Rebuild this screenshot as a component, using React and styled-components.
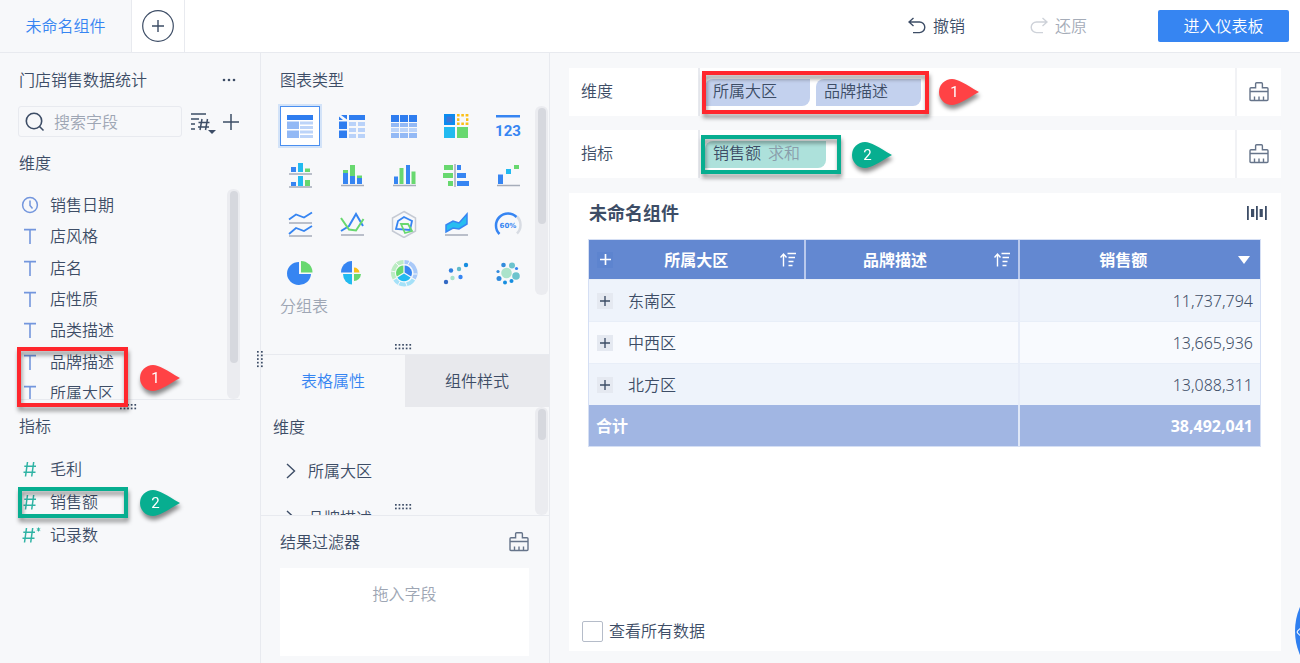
import React from 'react';
import styled, { createGlobalStyle, css } from 'styled-components';

const colors = {
	text: '#3d4d66',
	muted: '#9ea6b4',
	blue: '#3685f2',
	field: '#7396dd',
	teal: '#2fb3a4',
	panel: '#f7f8fa',
	line: '#e8eaef',
	red: '#ff272d',
	green: '#07ae90',
};

const GlobalStyle = createGlobalStyle`
	* {
		box-sizing: border-box;
	}

	body {
		margin: 0;
		overflow: hidden;
		background: #ffffff;
		color: ${colors.text};
		font: 350 16px/24px 'Noto Sans', 'Noto Sans CJK SC', sans-serif;
	}

	button,
	input {
		font: inherit;
		color: inherit;
	}

	button {
		padding: 0;
		border: 0;
		background: none;
	}

	svg {
		display: block;
		flex: none;
	}
`;

const Page = styled.div`
	position: relative;
	display: flex;
	flex-direction: column;
	height: 100vh;
	overflow: hidden;
`;

const Header = styled.header`
	display: flex;
	flex: none;
	height: 53px;
	border-bottom: 1px solid ${colors.line};
`;

const ComponentTab = styled.button`
	width: 132px;
	border-right: 1px solid ${colors.line};
	background: ${colors.panel};
	color: ${colors.blue};
`;

const AddTab = styled.button`
	display: flex;
	align-items: center;
	justify-content: center;
	width: 53px;
	border-right: 1px solid ${colors.line};
`;

const HeaderActions = styled.div`
	display: flex;
	align-items: center;
	margin-left: auto;
	padding-right: 11px;
`;

const HeaderAction = styled.button`
	display: flex;
	align-items: center;
	gap: 7px;
	margin-right: ${(props) => props.$gap}px;
	color: ${(props) => (props.disabled ? '#a5acb8' : colors.text)};
`;

const EnterButton = styled.button`
	width: 131px;
	height: 32px;
	border-radius: 2px;
	background: ${colors.blue};
	color: #ffffff;
`;

const Body = styled.div`
	display: flex;
	flex: 1;
	min-height: 0;
	background: ${colors.panel};
`;

const Sidebar = styled.aside`
	position: relative;
	display: flex;
	flex-direction: column;
	flex: none;
	width: 261px;
	padding: 15px 20px 0 18px;
	border-right: 1px solid ${colors.line};
`;

const TitleRow = styled.div`
	display: flex;
	align-items: center;
	justify-content: space-between;
	padding: 0 3px 0 1px;
`;

const Heading = styled.h2`
	margin: 0;
	font-size: 16px;
	font-weight: 350;
`;

const SearchRow = styled.div`
	display: flex;
	align-items: center;
	margin-top: 14px;
	padding-right: 1px;
`;

const SearchBox = styled.label`
	display: flex;
	align-items: center;
	gap: 9px;
	flex: 1;
	min-width: 0;
	height: 31px;
	margin-right: 8px;
	padding: 0 6px;
	border: 1px solid ${colors.line};
	border-radius: 3px;

	input {
		flex: 1;
		min-width: 0;
		padding: 0;
		border: 0;
		outline: 0;
		background: none;
	}

	input::placeholder {
		color: ${colors.muted};
		opacity: 1;
	}
`;

const IconButton = styled.button`
	display: flex;
	align-items: center;
	justify-content: center;
`;

const SortButton = styled(IconButton)`
	margin-right: 6px;
`;

const GroupTitle = styled(Heading)`
	margin: ${(props) => props.$top}px 1px 0;
`;

const FieldScroll = styled.div`
	display: flex;
	justify-content: space-between;
	height: 211px;
	margin-top: 14px;
	border-bottom: 1px solid ${colors.line};
	overflow: hidden;
`;

const FieldList = styled.ul`
	display: grid;
	grid-auto-rows: 1fr;
	height: ${(props) => props.$height}px;
	margin: ${(props) => props.$top || 0}px 0 0;
	padding: 0;
	list-style: none;
`;

const Field = styled.li`
	display: flex;
	align-items: center;
	gap: 8px;
`;

const Track = styled.div`
	flex: none;
	width: 13px;
	height: ${(props) => props.$height};
	margin-top: ${(props) => props.$top || 0}px;
	padding: 2px;
	border-radius: 6px;
	background: #ebecf0;
`;

const Thumb = styled.div`
	width: 8px;
	height: ${(props) => props.$height}px;
	border-radius: 4px;
	margin: 0 auto;
	background: #d6d8de;
`;

const HandleRow = styled.div`
	display: flex;
	justify-content: center;
	height: 14px;
	padding-top: 4px;
`;

const SideHandle = styled.div`
	position: absolute;
	right: -3px;
	top: 298px;
	z-index: 1;
`;

const Middle = styled.section`
	display: flex;
	flex-direction: column;
	flex: none;
	width: 289px;
	border-right: 1px solid ${colors.line};
`;

const ChartTypes = styled.div`
	display: flex;
	justify-content: space-between;
	height: 302px;
	padding: 15px 1px 0 13px;
	border-bottom: 1px solid ${colors.line};
`;

const ChartTypesMain = styled.div`
	display: flex;
	flex-direction: column;

	${Heading} {
		margin-left: 6px;
	}
`;

const ChartGrid = styled.div`
	display: grid;
	grid-template-columns: repeat(5, 52px);
	grid-auto-rows: 49px;
	margin-top: 9px;
`;

const ChartButton = styled.button`
	display: flex;
	align-items: center;
	justify-content: center;
	justify-self: center;
	align-self: center;
	width: 40px;
	height: 40px;
	${(props) =>
		props.$active &&
		css`
			border: 1px solid #4a8ff0;
			box-shadow: 0 0 0 2px #d3e3f8;
			background: #ffffff;
		`}
`;

const ChartName = styled.div`
	margin-top: -3px;
	padding-left: 6px;
	color: ${colors.muted};
`;

const MiddleHandle = styled.div`
	display: flex;
	justify-content: center;
	margin: auto 0 4px;
`;

const Tabs = styled.div`
	display: flex;
	flex: none;
	height: 52px;
`;

const Tab = styled.button`
	flex: 1;
	background: ${(props) => (props.$active ? 'transparent' : '#e8e9ed')};
	color: ${(props) => (props.$active ? colors.blue : colors.text)};
`;

const Attributes = styled.div`
	position: relative;
	display: flex;
	justify-content: space-between;
	height: 109px;
	padding: 0 1px 0 12px;
	border-bottom: 1px solid ${colors.line};
	overflow: hidden;
`;

const AttributeMain = styled.div`
	padding-top: 8px;
`;

const AttributeItem = styled.button`
	display: flex;
	align-items: center;
	gap: 11px;
	height: 24px;
	margin: ${(props) => props.$top}px 0 0 12px;
`;

const AttributeHandle = styled.div`
	position: absolute;
	left: 50%;
	bottom: 5px;
	margin-left: -10px;
`;

const Filter = styled.div`
	display: flex;
	flex-direction: column;
	flex: 1;
	padding: 14px 20px 7px 19px;
`;

const FilterTitle = styled.div`
	display: flex;
	align-items: center;
	justify-content: space-between;
`;

const DropArea = styled.div`
	flex: 1;
	margin-top: 14px;
	padding-top: 14px;
	background: #ffffff;
	color: ${colors.muted};
	text-align: center;
`;

const Main = styled.main`
	display: flex;
	flex-direction: column;
	flex: 1;
	gap: 14px;
	min-width: 0;
	padding: 15px 19px 12px;
`;

const Shelf = styled.div`
	display: flex;
	flex: none;
	height: 48px;
	background: #ffffff;
`;

const ShelfLabel = styled.div`
	width: 131px;
	padding: 11px 12px;
	border-right: 2px solid ${colors.line};
`;

const Chips = styled.div`
	display: flex;
	align-items: center;
	gap: 6px;
	flex: 1;
	padding-left: 5px;
`;

const Chip = styled.div`
	min-width: 105px;
	height: 27px;
	padding: 0 ${(props) => (props.$measure ? 26 : 7)}px 0 8px;
	border-radius: 8px 0;
	background: ${(props) => (props.$measure ? '#ade1db' : '#c3d1ee')};

	span {
		margin-left: 7px;
		color: #8a9eab;
	}
`;

const ShelfClear = styled(IconButton)`
	width: 46px;
	border-left: 2px solid #f1f2f5;
`;

const ChartCard = styled.section`
	display: flex;
	flex-direction: column;
	flex: 1;
	margin-top: 1px;
	padding: 8px 14px 8px 13px;
	background: #ffffff;
`;

const CardHeader = styled.div`
	display: flex;
	align-items: center;
	justify-content: space-between;
	padding-left: 7px;
`;

const CardTitle = styled.h1`
	margin: 0;
	font-size: 18px;
	line-height: 24px;
	font-weight: 700;
`;

const TableWrap = styled.div`
	margin: 14px 6px 0;
	border: 1px solid #d5dff4;
`;

const Table = styled.table`
	width: 100%;
	border-collapse: separate;
	border-spacing: 0;
	table-layout: fixed;
`;

const HeadCell = styled.th`
	width: ${(props) => props.$width};
	height: 39px;
	padding: 0 8px 0 ${(props) => (props.$first ? 8 : 0)}px;
	border-left: ${(props) => (props.$first ? '0' : '2px solid #b9c9ed')};
	background: #6388d1;
	color: #ffffff;
	font-weight: 700;
`;

const HeadContent = styled.div`
	display: flex;
	align-items: center;
	gap: 10px;

	> span {
		flex: 1;
		text-align: center;
	}
`;

const Row = styled.tr`
	background: ${(props) => (props.$even ? '#f8fafe' : '#eef3fb')};
`;

const Cell = styled.td`
	height: 42px;
	padding: 0 7px 0 8px;
	border-top: 1px solid #e8eef8;
	border-left: ${(props) => (props.$number ? '2px solid #e8edf8' : '0')};
	text-align: ${(props) => (props.$number ? 'right' : 'left')};
`;

const FootCell = styled.td`
	height: 41px;
	padding: 0 7px;
	border-left: ${(props) => (props.$number ? '2px solid #dfe7f7' : '0')};
	background: #a1b6e3;
	color: #ffffff;
	font-weight: 700;
	text-align: ${(props) => (props.$number ? 'right' : 'left')};
`;

const RowLabel = styled.div`
	display: flex;
	align-items: center;
	gap: 15px;
`;

const Expand = styled.button`
	display: flex;
	align-items: center;
	justify-content: center;
	width: 16px;
	height: 16px;
	background: ${(props) => (props.$head ? '#5d84cf' : '#e5e9f1')};
`;

const ShowAll = styled.label`
	display: flex;
	align-items: center;
	gap: 6px;
	margin-top: auto;

	input {
		appearance: none;
		width: 21px;
		height: 21px;
		margin: 0;
		border: 1px solid #b5bcc9;
		border-radius: 2px;
		background: #ffffff;
	}
`;

const HelpBubble = styled.button`
	position: absolute;
	right: -115px;
	bottom: -28px;
	width: 120px;
	height: 120px;
	border-radius: 50%;
	background: #2f7ff0;

	&::before {
		content: '';
		position: absolute;
		top: 56px;
		left: 3px;
		width: 8px;
		height: 8px;
		border: 1px solid #ffffff;
		border-radius: 2px;
		transform: rotate(45deg);
	}
`;

/* callouts drawn over the page */
const Frame = styled.div`
	position: absolute;
	left: ${(props) => props.$x}px;
	top: ${(props) => props.$y}px;
	width: ${(props) => props.$w}px;
	height: ${(props) => props.$h}px;
	border: 4px solid ${(props) => props.$color};
	filter: drop-shadow(1px 4px 2px rgba(0, 0, 0, 0.4));
	pointer-events: none;
	z-index: 2;
`;

const PinBox = styled.div`
	position: absolute;
	left: ${(props) => props.$x}px;
	top: ${(props) => props.$y}px;
	width: 40px;
	height: 26px;
	color: #ffffff;
	font: 15px/26px Roboto, sans-serif;
	filter: drop-shadow(1px 4px 2px rgba(0, 0, 0, 0.45));
	z-index: 2;

	svg {
		position: absolute;
		inset: 0;
	}

	span {
		position: relative;
		display: block;
		width: 31px;
		text-align: center;
	}
`;

const Plus = ({ size, width = 1.5, color = colors.text }) => (
	<svg width={size} height={size} viewBox="0 0 16 16" stroke={color} strokeWidth={width}>
		<path d="M8 0v16M0 8h16" />
	</svg>
);

const Brush = () => (
	<svg width="20" height="20" viewBox="0 0 20 20" fill="none" stroke="#66748a" strokeWidth="1.4">
		<path d="M1 9.500V6.700q0-1 1-1h4.600V1.700q0-1 1-1h4.800q1 0 1 1v4H18q1 0 1 1V17.500q0 1-1 1H2q-1 0-1-1v-8h18M5.500 18.500v-4M10 18.500v-4M14.500 18.500v-4" />
	</svg>
);

const Dots = ({ vertical }) => (
	<svg width={vertical ? 6 : 18} height={vertical ? 18 : 6} fill={colors.text}>
		{[0, 1, 2, 3, 4].map((i) =>
			[0, 1].map((j) => (
				<rect
					key={`${i}-${j}`}
					x={vertical ? j * 4 : i * 3.6}
					y={vertical ? i * 3.6 : j * 3.6}
					width="1.7"
					height="1.7"
				/>
			))
		)}
	</svg>
);

const ClockIcon = () => (
	<svg width="24" height="18" fill="none" stroke={colors.field} strokeWidth="1.5">
		<circle cx="12" cy="9" r="7.4" />
		<path d="M12 4.5V9.5l2.5 3" />
	</svg>
);

const TextIcon = () => (
	<svg width="24" height="18" fill="none" stroke={colors.field} strokeWidth="1.6">
		<path d="M6 2.6h12M12 2.6V17" />
	</svg>
);

const NumberIcon = ({ star }) => (
	<svg width="24" height="18" fill="none" stroke={colors.teal} strokeWidth="1.5">
		<g transform={star ? 'translate(-1 0)' : undefined}>
			<path d="M9.5 2L7.5 16.5M15.7 2l-2 14.5M6.3 6.2H18M5.5 12.2h12" />
		</g>
		{star && <path d="M20.5 1.5v4M18.8 2.5l3.4 2M22.2 2.5l-3.4 2" strokeWidth="1" />}
	</svg>
);

const SortIcon = () => (
	<svg width="16" height="16" fill="none" stroke="#ffffff" strokeWidth="1.4">
		<path d="M3.500 14.500V2.500M0.500 5.500l3-3.500 3 3.500M7.500 1.500h8.500M8.500 5.500h6.500M8.500 9.500h5M8.500 13.500h4" />
	</svg>
);

const B = '#3685f2';
const G = '#68d86f';
const C = '#22baf0';

const Base = ({ y = 23 }) => <path d={`M3 ${y}h23`} stroke="#a6adba" strokeWidth="1.5" />;

const chartIcons = [
	<>
		<path fill="#2f7def" d="M1 3h26v5H1z" />
		<path fill="#93b9f5" d="M1 9.5h12V17H1zM1 18.5h12V26H1z" />
		<path fill="#bcd4f9" d="M14 9.5h13v3H14zM14 14h13v3H14zM14 18.5h13v3H14zM14 23h13v3H14z" />
	</>,
	<>
		<path fill="#2f7def" d="M11 3h16v5H11zM1 9.5h8V17H1zM1 18.5h8V26H1zM1 4.5L5 8H1zM3 3h6v4.5z" />
		<path fill="#b9d2f9" d="M11 10h7v4h-7zM20 10h7v4h-7zM11 16h7v4h-7zM20 16h7v4h-7zM11 22h7v4h-7zM20 22h7v4h-7z" />
	</>,
	<>
		<path fill="#2f7def" d="M1 3h8v7H1zM10 3h8v7h-8zM19 3h8v7h-8z" />
		<path fill="#93b9f5" d="M1 11h8v4H1zM10 11h8v4h-8zM19 11h8v4h-8zM1 21h8v5H1zM10 21h8v5h-8zM19 21h8v5h-8z" />
		<path fill="#bcd4f9" d="M1 16h8v4H1zM10 16h8v4h-8zM19 16h8v4h-8z" />
	</>,
	<>
		<path fill="#0a8bf0" d="M2 2h11v11H2z" />
		<path fill="#3b76d8" d="M4.5 4.5h6v6h-6z" />
		<path fill={C} d="M2 15h11v11H2z" />
		<path fill={G} d="M15 15h11v11H15z" />
		<path fill="none" stroke="#fbbf16" strokeWidth="2.4" strokeDasharray="2.6 1.7" d="M15 3.2h11.5M15 11.8h11.5M16.200 2v11M25.200 2v11" />
	</>,
	<>
		<path fill={B} d="M2 3h24v2.5H2z" />
		<text x="14" y="24" fill={B} fontFamily="'Liberation Sans Narrow', Roboto" fontSize="15" fontWeight="700" textAnchor="middle">
			123
		</text>
	</>,
	<>
		<path fill={B} d="M5 6h5v5H5zM5 21h5v4H5z" />
		<path fill={C} d="M12 2h5v9h-5zM12 15h5v10h-5z" />
		<path fill={G} d="M19 7.5h5V11h-5zM19 19h5v6h-5z" />
		<Base y={13} />
		<Base y={26} />
	</>,
	<>
		<path fill={B} d="M5 12h5v11H5zM12 15h5v8h-5zM19 17h5v6h-5z" />
		<path fill={G} d="M5 9h5v3H5zM12 4h5v11h-5zM19 14.5h5V17h-5z" />
		<Base y={24.5} />
	</>,
	<>
		<path fill={B} d="M4 15.5h4V23H4zM16 4h4v19h-4z" />
		<path fill={G} d="M9.5 7h4v16h-4zM21.5 10.5h4V23h-4z" />
		<Base y={24.5} />
	</>,
	<>
		<path fill={G} d="M2 4h9v5H2zM1 12h10v5H1zM6 20h5v5H6z" />
		<path fill={B} d="M15 4h4v5h-4zM15 12h9v5h-9zM15 20h12v5H15z" />
		<path stroke="#a6adba" strokeWidth="1.5" d="M13 3v23" />
	</>,
	<>
		<path fill={B} d="M4 13.5h5V23H4z" />
		<path fill={C} d="M12 8h5v5h-5z" />
		<path fill={G} d="M20 4h5v4h-5z" />
		<Base y={24.5} />
	</>,
	<>
		<path fill="none" stroke={B} strokeWidth="1.8" d="M3 9.5l7-5 8 3 8-5M3 24l7-6 8 3 8-5" />
		<Base y={13} />
		<Base y={26} />
	</>,
	<>
		<path fill="none" stroke={B} strokeWidth="2" d="M3 21l8-5 7-12 7 12" />
		<path fill="none" stroke={G} strokeWidth="2" d="M3 8l8 11.5 7 1L25.500 9" />
		<Base y={25} />
	</>,
	<>
		<path fill="none" stroke="#c5cad4" strokeWidth="1.5" d="M14 1.500l11.500 6.500v13L14 27.500 2.500 21V8z" />
		<path fill="none" stroke={B} strokeWidth="1.8" d="M14 7l8 4-2 9-14-1 2-8z" />
		<path fill="none" stroke={G} strokeWidth="1.8" d="M11 14h7l4 7-7 2z" />
	</>,
	<>
		<path fill="#26bdf0" stroke={B} strokeWidth="1.5" d="M4 15l7-4 6 2 8-9v10l-8 5-6-1-7 4z" />
		<Base y={25} />
	</>,
	<>
		<path fill="none" stroke="#d8dce3" strokeWidth="2.5" d="M23 6.500a12 12 0 0 1 0 17" />
		<path fill="none" stroke={B} strokeWidth="2.5" d="M5.500 24a12 12 0 1 1 17-17" />
		<text x="14" y="18" fill={B} fontFamily="DejaVu Sans" fontSize="7" fontWeight="700" textAnchor="middle">
			60%
		</text>
	</>,
	<>
		<path fill={B} d="M13 3v12h12A12 11.500 0 1 1 13 3z" />
		<path fill={G} d="M15 2a11.500 11.500 0 0 1 11.500 11.500H15z" />
	</>,
	<>
		<path fill={B} d="M14 2v11.500H3A11 11.500 0 0 1 14 2z" />
		<path fill="#fbbf16" d="M16 8.500a5.500 5.500 0 0 1 5.500 5H16z" />
		<path fill={C} d="M14 15v10.500A9.500 10.500 0 0 1 5 15z" />
		<path fill={G} d="M16 15h7a7 7.500 0 0 1-7 7z" />
	</>,
	<>
		<path fill="none" stroke="#a9c9f8" strokeWidth="4" d="M14.500 3a11 11 0 0 1 9.500 16.500" />
		<path fill="none" stroke="#a5e1f8" strokeWidth="4" d="M23.500 20.500a11 11 0 0 1-18.500 0" />
		<path fill="none" stroke="#bcecc3" strokeWidth="4" d="M4.500 19.500A11 11 0 0 1 13.500 3" />
		<path stroke="#f7f8fa" d="M20 2l-3 5M27 15h-5M17 27l-2-5M8 26l3-5M1 12l5 1M6 4l4 4" />
		<path fill={B} d="M14.600 6.500a7.500 7.500 0 0 1 6.500 11l-6.500-4z" />
		<path fill={C} d="M20.500 18.500a7.500 7.500 0 0 1-13 0l6.500-4z" />
		<path fill={G} d="M13.400 6.500a7.500 7.500 0 0 0-6.500 11l6.500-4z" />
	</>,
	<>
		<circle cx="4" cy="23" r="2.2" fill="#3269c4" />
		<circle cx="9" cy="11.5" r="2.2" fill="#2f7fe0" />
		<circle cx="10.5" cy="19" r="2.2" fill="#a7e2cb" />
		<circle cx="17" cy="10" r="2.2" fill="#62bccb" />
		<circle cx="18.5" cy="18" r="2.2" fill={B} />
		<circle cx="24" cy="6" r="2.2" fill="#168ee0" />
	</>,
	<>
		<circle cx="12.500" cy="14" r="5.3" fill="#abe3ca" />
		<circle cx="9.5" cy="6" r="2.3" fill="#318bdd" />
		<circle cx="18" cy="6.5" r="3" fill="#6cc3cd" />
		<circle cx="22.5" cy="9.5" r="1.6" fill={B} />
		<circle cx="22" cy="17" r="3.8" fill="#6cc3cd" />
		<circle cx="17.5" cy="22" r="2" fill="#168ee0" />
		<circle cx="11" cy="23.5" r="2" fill="#168ee0" />
		<circle cx="5" cy="19.5" r="2.5" fill="#318bdd" />
		<circle cx="4" cy="12.5" r="1.6" fill="#318bdd" />
	</>,
];

const chartNames = [
	'分组表', '交叉表', '明细表', '颜色表格', '指标卡',
	'多系列柱形图', '堆积柱形图', '分区柱形图', '对比柱状图', '瀑布图',
	'分区折线图', '折线图', '雷达图', '范围面积图', '仪表盘',
	'饼图', '玫瑰图', '多层饼图', '散点图', '聚合气泡图',
];

const dimensions = ['销售日期', '店风格', '店名', '店性质', '品类描述', '品牌描述', '所属大区'];
const measures = ['毛利', '销售额', '记录数'];

const rows = [
	{ area: '东南区', sales: '11,737,794' },
	{ area: '中西区', sales: '13,665,936' },
	{ area: '北方区', sales: '13,088,311' },
];

const Pin = ({ x, y, color, children }) => (
	<PinBox $x={x} $y={y}>
		<svg width="40" height="26" fill={color}>
			<path d="M13 0C19 0 26 5 40 13 26 21 19 26 13 26A13 13 0 0 1 13 0z" />
		</svg>
		<span>{children}</span>
	</PinBox>
);

const FieldPanel = () => (
	<Sidebar>
		<TitleRow>
			<Heading>门店销售数据统计</Heading>
			<IconButton aria-label="更多">
				<svg width="16" height="4" fill={colors.text}>
					<circle cx="3" cy="2" r="1.3" />
					<circle cx="8" cy="2" r="1.3" />
					<circle cx="13" cy="2" r="1.3" />
				</svg>
			</IconButton>
		</TitleRow>
		<SearchRow>
			<SearchBox>
				<svg width="20" height="20" fill="none" stroke={colors.text} strokeWidth="1.6">
					<circle cx="9" cy="9" r="7.7" />
					<path d="M14.5 14.5l4 4" />
				</svg>
				<input type="text" placeholder="搜索字段" aria-label="搜索字段" />
			</SearchBox>
			<SortButton aria-label="排序">
				<svg width="27" height="24" fill="none" stroke={colors.text} strokeWidth="1.5">
					<path d="M1 4h15M1 9h8M1 14h4M1 19h4" />
					<path d="M12 9l-2 11M17.5 9l-2 11M8.5 12.500h11M8 17h11" />
					<path d="M18 20h8l-4 4z" fill={colors.text} stroke="none" />
				</svg>
			</SortButton>
			<IconButton aria-label="添加字段">
				<Plus size={16} />
			</IconButton>
		</SearchRow>
		<GroupTitle $top={14}>维度</GroupTitle>
		<FieldScroll>
			<FieldList $height={220}>
				{dimensions.map((name, index) => (
					<Field key={name}>
						{index === 0 ? <ClockIcon /> : <TextIcon />}
						{name}
					</Field>
				))}
			</FieldList>
			<Track $height="210px">
				<Thumb $height={172} />
			</Track>
		</FieldScroll>
		<HandleRow>
			<Dots />
		</HandleRow>
		<GroupTitle $top={0}>指标</GroupTitle>
		<FieldList $height={99} $top={14}>
			{measures.map((name, index) => (
				<Field key={name}>
					<NumberIcon star={index === 2} />
					{name}
				</Field>
			))}
		</FieldList>
		<SideHandle>
			<Dots vertical />
		</SideHandle>
	</Sidebar>
);

const SettingsPanel = () => (
	<Middle>
		<ChartTypes>
			<ChartTypesMain>
				<Heading>图表类型</Heading>
				<ChartGrid>
					{chartIcons.map((icon, index) => (
						<ChartButton key={chartNames[index]} $active={index === 0} aria-label={chartNames[index]}>
							<svg width="28" height="28" viewBox="0 0 28 28">
								{icon}
							</svg>
						</ChartButton>
					))}
				</ChartGrid>
				<ChartName>分组表</ChartName>
				<MiddleHandle>
					<Dots />
				</MiddleHandle>
			</ChartTypesMain>
			<Track $height="189px" $top={38}>
				<Thumb $height={116} />
			</Track>
		</ChartTypes>
		<Tabs>
			<Tab $active>表格属性</Tab>
			<Tab>组件样式</Tab>
		</Tabs>
		<Attributes>
			<AttributeMain>
				<Heading>维度</Heading>
				{['所属大区', '品牌描述'].map((name, index) => (
					<AttributeItem key={name} $top={index === 0 ? 20 : 23}>
						<svg width="12" height="16" fill="none" stroke={colors.text} strokeWidth="1.4">
							<path d="M2 1l7.500 7L2 15" />
						</svg>
						{name}
					</AttributeItem>
				))}
			</AttributeMain>
			<Track $height="108px">
				<Thumb $height={31} />
			</Track>
			<AttributeHandle>
				<Dots />
			</AttributeHandle>
		</Attributes>
		<Filter>
			<FilterTitle>
				<Heading>结果过滤器</Heading>
				<IconButton aria-label="清空过滤器">
					<Brush />
				</IconButton>
			</FilterTitle>
			<DropArea>拖入字段</DropArea>
		</Filter>
	</Middle>
);

const DataTable = () => (
	<TableWrap>
		<Table>
			<thead>
				<tr>
					<HeadCell $first $width="32%">
						<HeadContent>
							<Expand $head aria-label="展开全部">
								<Plus size={11} width={2.4} color="#ffffff" />
							</Expand>
							<span>所属大区</span>
							<SortIcon />
						</HeadContent>
					</HeadCell>
					<HeadCell>
						<HeadContent>
							<span>品牌描述</span>
							<SortIcon />
						</HeadContent>
					</HeadCell>
					<HeadCell $width="36%">
						<HeadContent>
							<span>销售额</span>
							<svg width="16" height="16" fill="#ffffff">
								<path d="M2 4h12l-6 8z" />
							</svg>
						</HeadContent>
					</HeadCell>
				</tr>
			</thead>
			<tbody>
				{rows.map((row, index) => (
					<Row key={row.area} $even={index % 2 === 1}>
						<Cell colSpan={2}>
							<RowLabel>
								<Expand aria-label="展开">
									<Plus size={10} width={2.2} />
								</Expand>
								{row.area}
							</RowLabel>
						</Cell>
						<Cell $number>{row.sales}</Cell>
					</Row>
				))}
			</tbody>
			<tfoot>
				<tr>
					<FootCell colSpan={2}>合计</FootCell>
					<FootCell $number>38,492,041</FootCell>
				</tr>
			</tfoot>
		</Table>
	</TableWrap>
);

const App = () => {
	return (
		<Page>
			<GlobalStyle />
			<Header>
				<ComponentTab>未命名组件</ComponentTab>
				<AddTab aria-label="新建组件">
					<svg width="32" height="32" fill="none" stroke={colors.text} strokeWidth="1.2">
						<circle cx="16" cy="16" r="15.3" />
						<path d="M16 10v12M10 16h12" strokeWidth="1.4" />
					</svg>
				</AddTab>
				<HeaderActions>
					<HeaderAction $gap={65}>
						<svg width="18" height="18" fill="none" stroke={colors.text} strokeWidth="1.4">
							<path d="M5.500 1L1 5 5.500 9M1 5h10.500a5.300 5.300 0 0 1 0 10.600H5" />
						</svg>
						撤销
					</HeaderAction>
					<HeaderAction $gap={71} disabled>
						<svg width="18" height="18" fill="none" stroke="#ced2d9" strokeWidth="1.4">
							<path d="M12.500 1L17 5 12.500 9M17 5H6.500a5.300 5.300 0 0 0 0 10.600H13" />
						</svg>
						还原
					</HeaderAction>
					<EnterButton>进入仪表板</EnterButton>
				</HeaderActions>
			</Header>
			<Body>
				<FieldPanel />
				<SettingsPanel />
				<Main>
					<Shelf>
						<ShelfLabel>维度</ShelfLabel>
						<Chips>
							<Chip>所属大区</Chip>
							<Chip>品牌描述</Chip>
						</Chips>
						<ShelfClear aria-label="清空维度">
							<Brush />
						</ShelfClear>
					</Shelf>
					<Shelf>
						<ShelfLabel>指标</ShelfLabel>
						<Chips>
							<Chip $measure>
								销售额<span>求和</span>
							</Chip>
						</Chips>
						<ShelfClear aria-label="清空指标">
							<Brush />
						</ShelfClear>
					</Shelf>
					<ChartCard>
						<CardHeader>
							<CardTitle>未命名组件</CardTitle>
							<svg width="20" height="14" fill={colors.text}>
								<path d="M0 0h1.800v14H0zM4 3h3.200v8H4zM9 0h1.800v14H9zM12.600 3h3.200v8h-3.200zM18 0h1.800v14H18z" />
							</svg>
						</CardHeader>
						<DataTable />
						<ShowAll>
							<input type="checkbox" />
							查看所有数据
						</ShowAll>
					</ChartCard>
				</Main>
			</Body>
			<HelpBubble aria-label="帮助" />
			<Frame $x={17} $y={347} $w={111} $h={60} $color={colors.red} />
			<Frame $x={18} $y={487} $w={110} $h={31} $color={colors.green} />
			<Frame $x={702} $y={71} $w={227} $h={43} $color={colors.red} />
			<Frame $x={701} $y={135} $w={140} $h={39} $color={colors.green} />
			<Pin x={140} y={365} color="#ff4245">1</Pin>
			<Pin x={140} y={490} color={colors.green}>2</Pin>
			<Pin x={939} y={79} color="#ff4245">1</Pin>
			<Pin x={852} y={142} color={colors.green}>2</Pin>
		</Page>
	);
};

export default App;
